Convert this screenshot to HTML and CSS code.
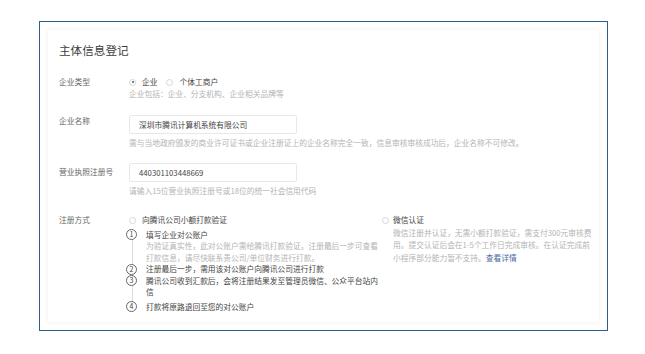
FILE: index.html
```html
<!DOCTYPE html>
<html lang="zh-CN">
<head>
  <meta charset="UTF-8" />
  <title>主体信息登记</title>
  <meta name="viewport" content="width=device-width, initial-scale=1.0" />
  <link rel="stylesheet" href="styles.css">
</head>
<body>

  <div class="frame">
    <div class="card">
      <h2 class="title">主体信息登记</h2>

      <div class="row row-type">
        <div class="label">企业类型</div>
        <div class="field">
          <div class="radios">
            <span class="radio checked"><span class="dot"></span>企业</span>
            <span class="radio"><span class="dot"></span>个体工商户</span>
          </div>
          <p class="help">企业包括：企业、分支机构、企业相关品牌等</p>
        </div>
      </div>

      <div class="row row-name">
        <div class="label">企业名称</div>
        <div class="field">
          <div class="input">深圳市腾讯计算机系统有限公司</div>
          <p class="help">需与当地政府颁发的商业许可证书或企业注册证上的企业名称完全一致，信息审核审核成功后，企业名称不可修改。</p>
        </div>
      </div>

      <div class="row row-license">
        <div class="label">营业执照注册号</div>
        <div class="field">
          <div class="input">440301103448669</div>
          <p class="help">请输入15位营业执照注册号或18位的统一社会信用代码</p>
        </div>
      </div>

      <div class="row row-method">
        <div class="label">注册方式</div>
        <div class="field methods">
          <div class="method method-bank">
            <span class="radio"><span class="dot"></span>向腾讯公司小额打款验证</span>
            <ol class="steps">
              <li>
                <span class="num">1</span>
                <div class="step-body">
                  <p class="step-title">填写企业对公账户</p>
                  <p class="step-desc">为验证真实性，此对公账户需给腾讯打款验证。注册最后一步可查看打款信息，请尽快联系贵公司/单位财务进行打款。</p>
                </div>
              </li>
              <li>
                <span class="num">2</span>
                <div class="step-body">
                  <p class="step-title">注册最后一步，需用该对公账户向腾讯公司进行打款</p>
                </div>
              </li>
              <li>
                <span class="num">3</span>
                <div class="step-body">
                  <p class="step-title">腾讯公司收到汇款后，会将注册结果发至管理员微信、公众平台站内信</p>
                </div>
              </li>
              <li class="last">
                <span class="num">4</span>
                <div class="step-body">
                  <p class="step-title">打款将原路退回至您的对公账户</p>
                </div>
              </li>
            </ol>
          </div>
          <div class="method method-wx">
            <span class="radio"><span class="dot"></span>微信认证</span>
            <p class="wx-desc">微信注册并认证，无需小额打款验证，需支付300元审核费用。提交认证后会在1-5个工作日完成审核。在认证完成前小程序部分能力暂不支持。<a href="#">查看详情</a></p>
          </div>
        </div>
      </div>
    </div>
  </div>

</body>
</html>
```

FILE: styles.css
```css
body {
  margin: 0;
  background-color: #fff;
  font-family: "Noto Sans CJK SC", "Noto Sans", sans-serif;
  font-size: 7.74px;
  color: #444;
}

p {
  margin: 0;
}

.frame {
  box-sizing: border-box;
  width: 569px;
  height: 310px;
  margin: 21px 0 0 39px;
  padding: 8px;
  border: 1px solid #2f5e8c;
}

.card {
  box-sizing: border-box;
  height: 292px;
  padding: 13px 11px 0 11px;
  background-color: #fff;
  box-shadow: 0 0 5px rgba(0, 0, 0, 0.07);
}

.title {
  margin: 0;
  font-size: 11.6px;
  font-weight: normal;
  line-height: 14px;
  color: #3c3c3c;
}

.row {
  display: flex;
  line-height: 12px;
}

.label {
  width: 70px;
  flex-shrink: 0;
  color: #666;
}

.field {
  flex: 1;
}

.help {
  color: #b4b4b4;
}

.row-type {
  margin-top: 19px;
}

.row-name {
  margin-top: 15px;
}

.row-license {
  margin-top: 14px;
}

.row-license .label {
  padding-top: 3px;
}

.row-method {
  margin-top: 17px;
}

.radios {
  display: flex;
  gap: 9px;
}

.radio {
  display: inline-flex;
  align-items: center;
  gap: 6px;
  color: #444;
}

.dot {
  box-sizing: border-box;
  width: 7px;
  height: 7px;
  border: 1px solid #d6d6d6;
  border-radius: 50%;
  position: relative;
}

.checked .dot::after {
  content: "";
  position: absolute;
  left: 1.5px;
  top: 1.5px;
  width: 2px;
  height: 2px;
  border-radius: 50%;
  background-color: #555;
}

.input {
  box-sizing: border-box;
  width: 168px;
  height: 19px;
  padding-left: 9px;
  line-height: 18px;
  border: 1px solid #e8e8e8;
  border-radius: 2px;
  color: #444;
}

.input + .help {
  margin-top: 3px;
}

.methods {
  display: flex;
}

.method-bank {
  width: 253px;
  flex-shrink: 0;
}

.method-wx {
  width: 211px;
}

.method-wx .radio {
  gap: 4px;
}

.wx-desc {
  width: 201px;
  margin-left: 11px;
  line-height: 12.5px;
  color: #b4b4b4;
}

.wx-desc a {
  color: #4a6aa3;
  text-decoration: none;
}

.steps {
  list-style: none;
  margin: 2px 0 0 -3px;
  padding: 0;
  position: relative;
  line-height: 11.5px;
}

.steps::before {
  content: "";
  position: absolute;
  left: 5.5px;
  top: 8px;
  bottom: 8px;
  width: 1px;
  background-color: #dcdcdc;
}

.steps li {
  display: flex;
  gap: 9px;
}

.steps li.last {
  margin-top: 3px;
}

.num {
  box-sizing: border-box;
  width: 11px;
  height: 11px;
  flex-shrink: 0;
  margin-top: 0.5px;
  border: 1px solid #666;
  border-radius: 50%;
  background-color: #fff;
  position: relative;
  font-size: 7px;
  line-height: 9px;
  text-align: center;
  color: #444;
}

.step-body {
  width: 236px;
}

.step-title {
  color: #444;
}

.step-desc {
  color: #b4b4b4;
}
```
